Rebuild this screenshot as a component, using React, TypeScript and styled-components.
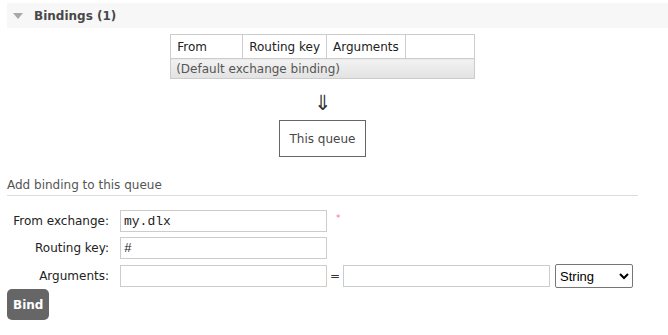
import React from 'react';
import styled, { createGlobalStyle } from 'styled-components';

const GlobalStyle = createGlobalStyle`
  body {
    margin: 0;
    background: #ffffff;
    font-family: "DejaVu Sans", Verdana, sans-serif;
    font-size: 12px;
    color: #484848;
  }
`;

const Page = styled.div`
  padding-top: 3px;
`;

const SectionHeader = styled.div`
  margin-left: 7px;
  height: 25px;
  background: #f7f7f7;
  display: flex;
  align-items: center;
  padding-left: 6px;
  gap: 11px;
`;

const Title = styled.h2`
  margin: 0;
  font-size: 12px;
  font-weight: bold;
  color: #484848;
`;

const Content = styled.div`
  margin: 0 30px 0 7px;
  display: flex;
  flex-direction: column;
  align-items: center;
`;

const BindingsTable = styled.table`
  margin-top: 6px;
  border-collapse: collapse;
  border: 1px solid #cccccc;
`;

const HeadCell = styled.th<{ w: number }>`
  width: ${(p) => p.w}px;
  height: 24px;
  padding: 0 6px;
  box-sizing: border-box;
  border: 1px solid #cccccc;
  font-weight: normal;
  text-align: left;
  white-space: nowrap;
  color: #222222;
  background: #ffffff;
`;

const DefaultCell = styled.td`
  height: 19px;
  padding: 0 5px;
  white-space: nowrap;
  color: #555555;
  background: linear-gradient(#f2f2f2, #e2e2e2);
  border: 1px solid #cccccc;
`;

const Arrow = styled.div`
  margin-top: 14px;
  font-size: 21px;
  line-height: 21px;
  color: #333333;
`;

const QueueBox = styled.div`
  margin-top: 6px;
  width: 87px;
  height: 37px;
  box-sizing: border-box;
  border: 1px solid #666666;
  display: flex;
  align-items: center;
  justify-content: center;
  color: #484848;
`;

const SubHeading = styled.h3`
  align-self: stretch;
  margin: 21px 0 0;
  padding-bottom: 3px;
  font-size: 12px;
  font-weight: normal;
  color: #555555;
  border-bottom: 1px solid #dddddd;
`;

const Form = styled.div`
  margin: 14px 0 0 7px;
  display: grid;
  grid-template-columns: 102px auto;
  column-gap: 11px;
  row-gap: 5px;
  align-items: center;
`;

const Label = styled.label`
  text-align: right;
  color: #222222;
`;

const Field = styled.div`
  display: flex;
  align-items: center;
`;

const TextInput = styled.input`
  width: 207px;
  height: 22px;
  box-sizing: border-box;
  border: 1px solid #cccccc;
  padding: 0 3px;
  font-family: "Liberation Mono", "Courier New", monospace;
  font-size: 13px;
  color: #222222;
  outline: none;
`;

const Required = styled.span`
  margin-left: 9px;
  margin-top: -6px;
  color: #f27b8e;
  font-size: 9px;
`;

const Equals = styled.span`
  margin: 0 3px 0 3px;
  color: #333333;
`;

const TypeSelect = styled.select`
  margin-left: 5px;
  width: 78px;
  height: 24px;
  border: 1px solid #767676;
  border-radius: 2px;
  background: #ffffff;
  font-family: "Liberation Sans", Arial, sans-serif;
  font-size: 13px;
  color: #000000;
`;

const BindButton = styled.button`
  margin: 1px 0 0 7px;
  width: 42px;
  height: 31px;
  border: none;
  border-radius: 5px;
  background: #666666;
  color: #ffffff;
  font-family: "DejaVu Sans", Verdana, sans-serif;
  font-size: 12px;
  font-weight: 600;
  cursor: pointer;
`;

const Triangle = () => (
  <svg width="10" height="6" viewBox="0 0 10 6">
    <path d="M0 0 L10 0 L5 6 Z" fill="#a8a8a8" />
  </svg>
);

const App = () => {
  return (
    <Page>
      <GlobalStyle />
      <SectionHeader>
        <Triangle />
        <Title>Bindings (1)</Title>
      </SectionHeader>
      <Content>
        <BindingsTable>
          <thead>
            <tr>
              <HeadCell w={72}>From</HeadCell>
              <HeadCell w={83}>Routing key</HeadCell>
              <HeadCell w={77}>Arguments</HeadCell>
              <HeadCell w={69}></HeadCell>
            </tr>
          </thead>
          <tbody>
            <tr>
              <DefaultCell colSpan={4}>(Default exchange binding)</DefaultCell>
            </tr>
          </tbody>
        </BindingsTable>
        <Arrow>⇓</Arrow>
        <QueueBox>This queue</QueueBox>
        <SubHeading>Add binding to this queue</SubHeading>
      </Content>
      <Form>
        <Label>From exchange:</Label>
        <Field>
          <TextInput defaultValue="my.dlx" />
          <Required>*</Required>
        </Field>
        <Label>Routing key:</Label>
        <Field>
          <TextInput defaultValue="#" />
        </Field>
        <Label>Arguments:</Label>
        <Field>
          <TextInput />
          <Equals>=</Equals>
          <TextInput />
          <TypeSelect defaultValue="String">
            <option>String</option>
            <option>Number</option>
            <option>Boolean</option>
            <option>List</option>
          </TypeSelect>
        </Field>
      </Form>
      <BindButton>Bind</BindButton>
    </Page>
  );
};

export default App;
